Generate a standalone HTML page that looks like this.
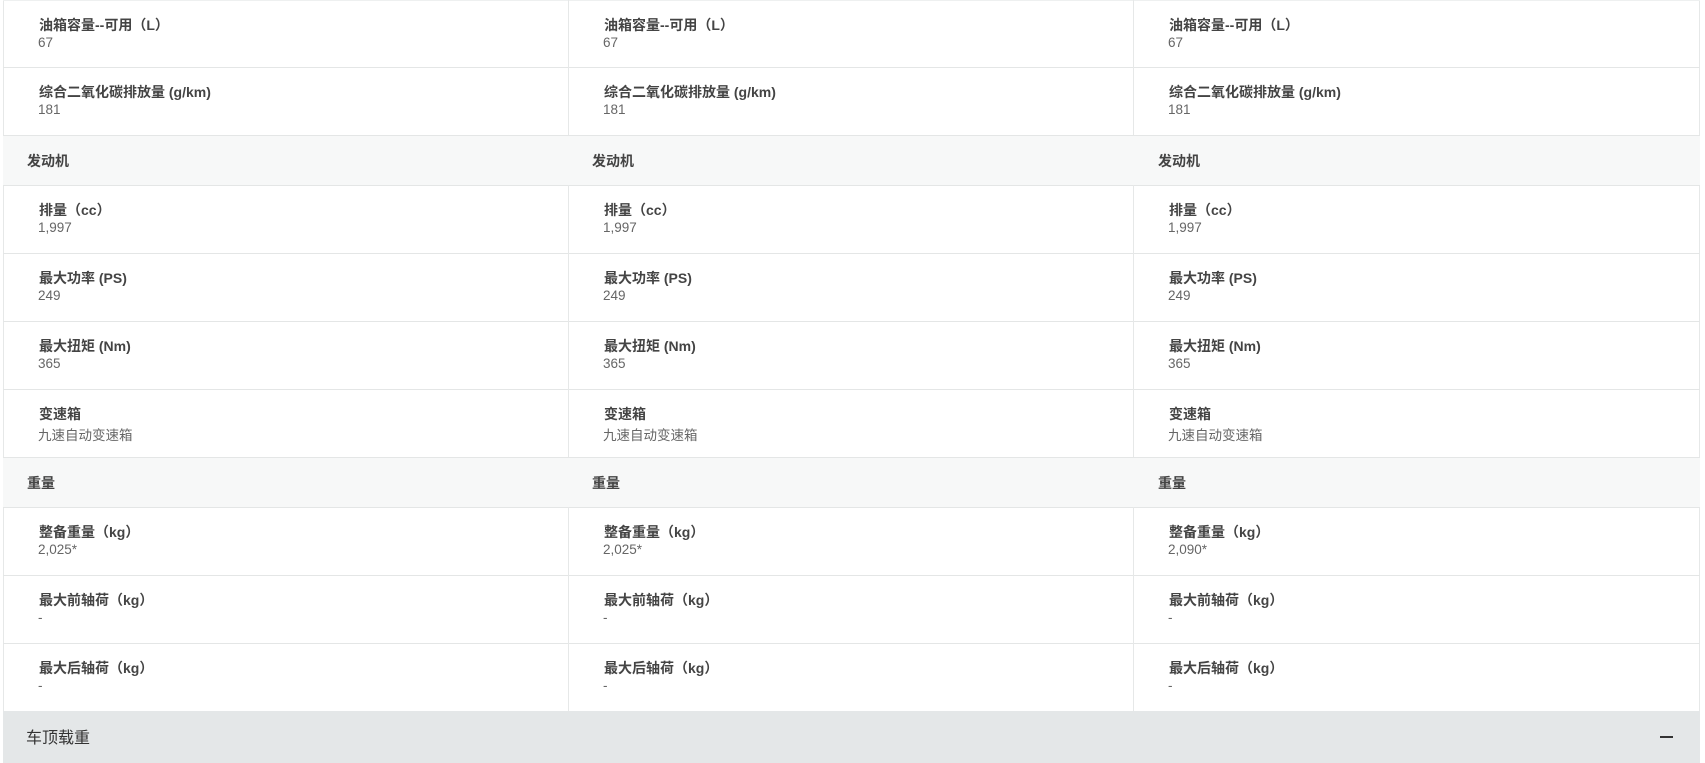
<!DOCTYPE html>
<html><head><meta charset="utf-8"><style>
*{margin:0;padding:0;box-sizing:border-box}
body{width:1705px;height:763px;background:#fff;position:relative;overflow:hidden;font-family:"Liberation Sans","Noto Sans CJK SC",sans-serif}
.wrap{position:absolute;left:3px;top:0;width:1697px;height:763px;border-left:1px solid #e6e8e8;border-right:1px solid #e6e8e8}
.row{position:absolute;left:3px;width:1697px;border-top:1px solid #e4e6e6}
.hd{background:#f7f8f8}
.vd{position:absolute;width:1px;background:#e6e8e8}
.l{position:absolute;font-size:14px;font-weight:bold;color:#444;white-space:nowrap}
.v{position:absolute;font-size:13.5px;color:#666;white-space:nowrap}
.h{position:absolute;font-size:14px;font-weight:bold;color:#444}
</style></head><body>
<div class="wrap"></div>
<div class="row" style="top:0;height:67px;border-top:1px solid #eef0f0"></div>
<div class="row" style="top:67px;height:68px"></div>
<div class="row hd" style="top:135px;height:50px"></div>
<div class="row" style="top:185px;height:68px"></div>
<div class="row" style="top:253px;height:68px"></div>
<div class="row" style="top:321px;height:68px"></div>
<div class="row" style="top:389px;height:68px"></div>
<div class="row hd" style="top:457px;height:50px"></div>
<div class="row" style="top:507px;height:68px"></div>
<div class="row" style="top:575px;height:68px"></div>
<div class="row" style="top:643px;height:68px"></div>
<div style="position:absolute;left:3px;top:711px;width:1697px;height:52px;background:#e4e7e8"></div>
<div style="position:absolute;left:26px;top:724px;font-size:16px;color:#333">车顶载重</div>
<div style="position:absolute;left:1660px;top:736px;width:13px;height:1.5px;background:#333"></div>
<div id="c"></div>
<script>
const rows=[[0,'r','油箱容量--可用（L）',['67','67','67']],[67,'r','综合二氧化碳排放量 (g/km)',['181','181','181']],[135,'h','发动机'],[185,'r','排量（cc）',['1,997','1,997','1,997']],[253,'r','最大功率 (PS)',['249','249','249']],[321,'r','最大扭矩 (Nm)',['365','365','365']],[389,'r','变速箱',['九速自动变速箱','九速自动变速箱','九速自动变速箱']],[457,'h','重量'],[507,'r','整备重量（kg）',['2,025*','2,025*','2,090*']],[575,'r','最大前轴荷（kg）',['-','-','-']],[643,'r','最大后轴荷（kg）',['-','-','-']]];
const lx=[39,604,1169],hx=[27,592,1158];let s='';
for(const r of rows){const y=r[0];
if(r[1]=='h'){for(let i=0;i<3;i++)s+=`<div class="h" style="left:${hx[i]}px;top:${y+16}px">${r[2]}</div>`;}
else{for(let i=0;i<3;i++){s+=`<div class="l" style="left:${lx[i]}px;top:${y+15}px">${r[2]}</div><div class="v" style="left:${lx[i]-1}px;top:${y+35}px">${r[3][i]}</div>`;}
s+=`<div class="vd" style="left:568px;top:${y}px;height:68px"></div><div class="vd" style="left:1133px;top:${y}px;height:68px"></div>`;}}
document.getElementById('c').innerHTML=s;
</script>
</body></html>
